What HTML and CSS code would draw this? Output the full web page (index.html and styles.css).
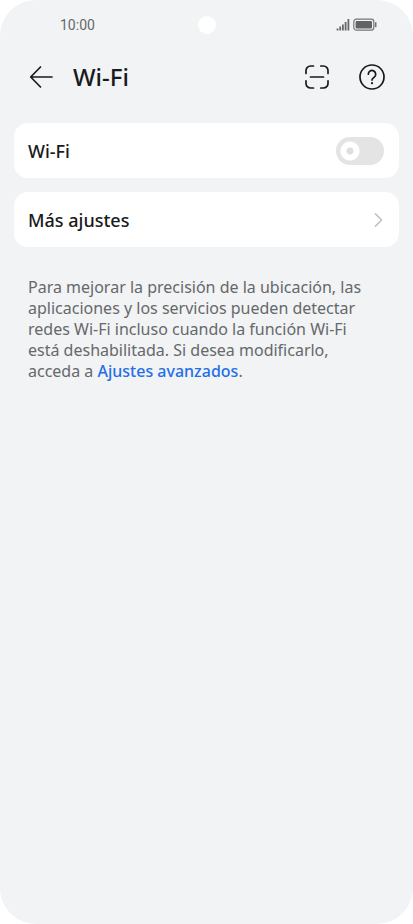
FILE: index.html
```html
<!DOCTYPE html>
<html lang="es">
<head>
<meta charset="utf-8">
<meta name="viewport" content="width=device-width, initial-scale=1">
<title>Wi-Fi</title>
<link rel="stylesheet" href="styles.css">
</head>
<body>
<div class="screen">
  <div class="status">
    <time class="clock">10:00</time>
    <span class="camera"></span>
    <span class="indicators">
      <svg width="14" height="14" viewBox="0 0 14 14" fill="none" stroke="#66686a" stroke-width="1.8" aria-hidden="true"><path d="M1.500 10.500v2M4.200 8.500v4M6.900 6.500v6M9.600 4v8.500M12.400 1v11.500"/></svg>
      <svg width="24" height="14" viewBox="0 0 24 14" aria-hidden="true"><rect x=".8" y="1.200" width="20" height="11" rx="2.600" fill="none" stroke="#747678" stroke-width="1.200"/><rect x="2.600" y="3" width="16.400" height="7.400" rx="1" fill="#616365"/><path d="M22.700 4.200v5" stroke="#747678" stroke-width="1.600"/></svg>
    </span>
  </div>
  <header class="bar">
    <button class="icon-button" type="button" aria-label="Atrás">
      <svg width="28" height="28" viewBox="0 0 28 28" fill="none" stroke="#191a1b" stroke-width="1.700" stroke-linecap="round" stroke-linejoin="round"><path d="M25 14H4M13.500 4 3.700 14l9.800 10"/></svg>
    </button>
    <h1 class="title">Wi-Fi</h1>
    <button class="icon-button" type="button" aria-label="Escanear">
      <svg width="28" height="28" viewBox="0 0 28 28" fill="none" stroke="#191a1b" stroke-width="1.700" stroke-linecap="round"><path d="M3 10.500V7.500a4.500 4.500 0 0 1 4.500-4.500h3M17.800 3h2.700A4.500 4.500 0 0 1 25 7.500v3M25 17.800v2.700a4.500 4.500 0 0 1-4.500 4.500h-2.700M10.500 25h-3A4.500 4.500 0 0 1 3 20.500v-2.700M7.500 14h13"/></svg>
    </button>
    <button class="icon-button" type="button" aria-label="Ayuda">
      <svg width="28" height="28" viewBox="0 0 28 28" fill="none" stroke="#191a1b" stroke-width="1.700" stroke-linecap="round" stroke-linejoin="round"><circle cx="14" cy="14" r="12"/><path d="M10.300 11.200a3.700 3.700 0 1 1 6 2.900c-1.400 1.100-2.300 1.500-2.300 3"/><circle cx="14" cy="20.200" r="1.100" fill="#191a1b" stroke="none"/></svg>
    </button>
  </header>
  <main class="content">
    <label class="card">
      <span>Wi-Fi</span>
      <input class="switch" type="checkbox" role="switch">
    </label>
    <a class="card" href="#mas">
      <span>Más ajustes</span>
      <svg width="12" height="16" viewBox="0 0 12 16" fill="none" stroke="#c2c3c4" stroke-width="1.700" stroke-linecap="round" stroke-linejoin="round" aria-hidden="true"><path d="M3.500 1.800 9.600 8l-6.100 6.200"/></svg>
    </a>
    <p class="note">Para mejorar la precisión de la ubicación, las aplicaciones y los servicios pueden detectar redes Wi-Fi incluso cuando la función Wi-Fi está deshabilitada. Si desea modificarlo, acceda a <a class="link" href="#avanzados">Ajustes avanzados</a>.</p>
  </main>
</div>
</body>
</html>
```
FILE: styles.css
```css
* {
  box-sizing: border-box;
}

body {
  margin: 0;
  background: #fff;
  color: #191a1b;
  font-family: "Noto Sans", sans-serif;
}

.screen {
  min-height: 100vh;
  border-radius: 36px;
  background: #f1f3f5;
}

.status {
  display: grid;
  grid-template-columns: 1fr auto 1fr;
  align-items: center;
  height: 50px;
  padding: 0 36px;
}

.clock {
  padding-left: 24px;
  color: #66686a;
  font-family: Roboto, sans-serif;
  font-size: 14px;
  line-height: 20px;
}

.camera {
  width: 18px;
  height: 18px;
  border-radius: 50%;
  background: #fff;
}

.indicators {
  display: flex;
  justify-content: flex-end;
  gap: 3px;
}

.bar {
  display: flex;
  align-items: center;
  gap: 18px;
  height: 54px;
  padding: 0 27px;
}

.icon-button {
  flex: none;
  width: 28px;
  height: 28px;
  padding: 0;
  border: 0;
  background: none;
}

.icon-button svg {
  display: block;
}

.icon-button + .icon-button {
  margin-left: 9px;
}

.title {
  flex: 1;
  margin: 0;
  font-size: 24px;
  font-weight: 500;
  line-height: 32px;
}

.content {
  display: flex;
  flex-direction: column;
  gap: 14px;
  padding: 19px 14px;
}

.card {
  display: flex;
  align-items: center;
  justify-content: space-between;
  height: 55px;
  padding: 0 15px 0 14px;
  border-radius: 14px;
  background: #fff;
  color: inherit;
  font-size: 18px;
  font-weight: 500;
  text-decoration: none;
}

.switch {
  appearance: none;
  width: 48px;
  height: 28px;
  margin: 0;
  border-radius: 14px;
  background: radial-gradient(circle at 14px 14px, #dedede 3px, #fff 4px, #fff 9px, #e4e4e4 10px);
}

.switch:checked {
  background: radial-gradient(circle at 34px 14px, #256fe5 3px, #fff 4px, #fff 9px, #256fe5 10px);
}

.note {
  margin: 16px 0 0;
  padding: 0 28px 0 14px;
  color: #66686a;
  font-size: 16px;
  line-height: 21px;
}

.link {
  color: #256fe5;
  font-weight: 500;
  text-decoration: none;
}
```
